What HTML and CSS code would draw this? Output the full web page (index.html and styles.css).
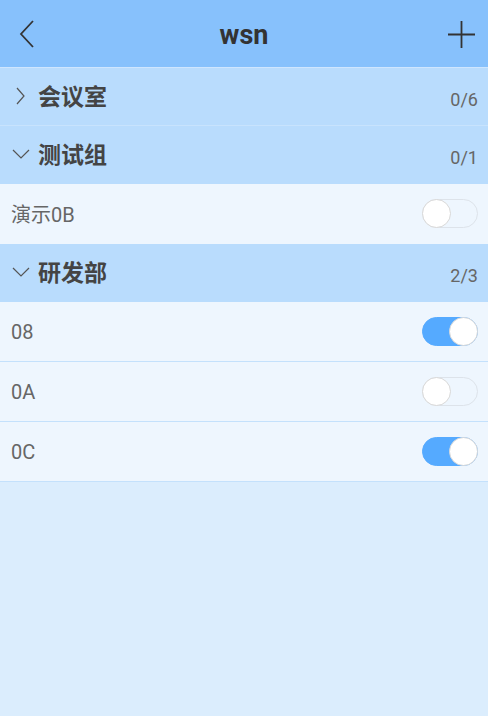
FILE: index.html
```html
<!DOCTYPE html>
<html lang="zh">

<head>
    <meta charset="UTF-8" />
    <title>wsn</title>
    <link rel="stylesheet" href="styles.css">
</head>

<body>
    <div class="topbar">
        <div class="bar-btn">
            <svg width="16" height="28" viewBox="0 0 16 28">
                <path d="M14 1 L2 14 L14 27" fill="none" stroke="#333" stroke-width="1.8" />
            </svg>
        </div>
        <div class="title">wsn</div>
        <div class="bar-btn right">
            <svg width="27" height="27" viewBox="0 0 27 27">
                <path d="M13.5 0 V27 M0 13.5 H27" fill="none" stroke="#333" stroke-width="1.8" />
            </svg>
        </div>
    </div>

    <div class="group">
        <svg class="arrow" width="18" height="18" viewBox="0 0 18 18">
            <path d="M5 1 L12 9 L5 17" fill="none" stroke="#555" stroke-width="1.2" />
        </svg>
        <span class="group-name">会议室</span>
        <span class="count">0/6</span>
    </div>

    <div class="group open">
        <svg class="arrow" width="18" height="12" viewBox="0 0 18 12">
            <path d="M1 2 L9 10 L17 2" fill="none" stroke="#555" stroke-width="1.2" />
        </svg>
        <span class="group-name">测试组</span>
        <span class="count">0/1</span>
    </div>
    <div class="item last">
        <span class="item-name">演示0B</span>
        <span class="switch"></span>
    </div>

    <div class="group open">
        <svg class="arrow" width="18" height="12" viewBox="0 0 18 12">
            <path d="M1 2 L9 10 L17 2" fill="none" stroke="#555" stroke-width="1.2" />
        </svg>
        <span class="group-name">研发部</span>
        <span class="count">2/3</span>
    </div>
    <div class="item">
        <span class="item-name">08</span>
        <span class="switch on"></span>
    </div>
    <div class="item">
        <span class="item-name">0A</span>
        <span class="switch"></span>
    </div>
    <div class="item">
        <span class="item-name">0C</span>
        <span class="switch on"></span>
    </div>
</body>

</html>
```

FILE: styles.css
```css
body {
    margin: 0;
    font-family: Roboto, "Noto Sans CJK SC", sans-serif;
    background-color: #dbedfd;
    color: #333;
}

.topbar {
    height: 67px;
    display: flex;
    align-items: center;
    padding: 0 13px 0 19px;
    background-color: #87c1fc;
    border-bottom: 1px solid #cfe6fe;
}

.bar-btn {
    width: 43px;
    display: flex;
    margin-top: 1px;
}

.bar-btn.right {
    width: 49px;
    justify-content: flex-end;
}

.title {
    flex: 1;
    text-align: center;
    font-size: 27px;
    font-weight: bold;
    color: #333;
    margin-top: 3px;
}

.group {
    height: 57px;
    display: flex;
    align-items: center;
    padding: 0 10px 0 12px;
    background-color: #b9dcfd;
    border-bottom: 1px solid #c8e3fd;
}

.group.open {
    border-bottom-color: #b9dcfd;
}

.group .arrow {
    margin-right: 8px;
    margin-top: -2px;
}

.group-name {
    font-size: 23px;
    font-weight: bold;
    color: #444;
    margin-top: -3px;
}

.count {
    margin-left: auto;
    margin-top: 6px;
    font-size: 18px;
    color: #666;
}

.item {
    height: 59px;
    display: flex;
    align-items: center;
    padding: 0 10px 0 11px;
    background-color: #eef6fe;
    border-bottom: 1px solid #c4e1fc;
}

.item.last {
    border-bottom-color: #eef6fe;
}

.item-name {
    font-size: 20px;
    color: #666;
}

/* 开关 */
.switch {
    margin-left: auto;
    width: 54px;
    height: 27px;
    border: 1px solid #dde3ea;
    border-radius: 15px;
    background-color: #eef6fe;
    position: relative;
}

.switch::after {
    content: "";
    position: absolute;
    top: -1px;
    left: -1px;
    width: 27px;
    height: 27px;
    border: 1px solid #d8d8d8;
    border-radius: 50%;
    background-color: #fff;
}

.switch.on {
    background-color: #55aaff;
    border-color: #55aaff;
}

.switch.on::after {
    left: auto;
    right: -1px;
}
```
